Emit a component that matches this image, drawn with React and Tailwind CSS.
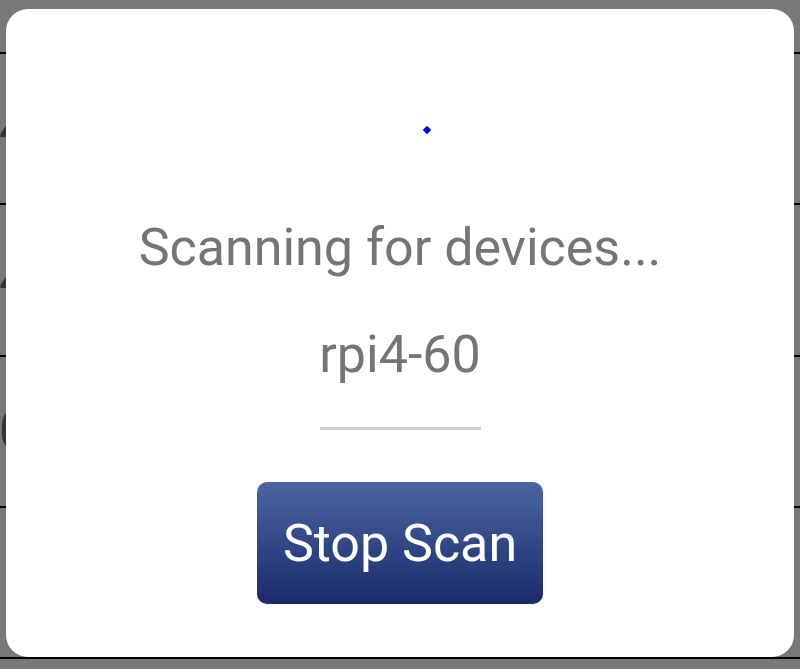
import React from "react";

const rows = ["4", "4", "0", "", ""];

export default function App() {
  return (
    <div className="relative h-[669px] w-[800px] overflow-hidden bg-[#787878] font-['Roboto',sans-serif]">
      {/* list behind the dialog */}
      <div className="flex flex-col">
        <div className="h-[52px]" />
        {rows.map((r, i) => (
          <div
            key={i}
            className="flex h-[151.25px] shrink-0 items-center border-t-2 border-black text-[52px] text-[#333333]"
          >
            <span className="-ml-[1px]">{r}</span>
          </div>
        ))}
      </div>

      {/* dialog */}
      <div className="absolute left-[6px] top-[9px] flex h-[648px] w-[788px] flex-col items-center rounded-[22px] bg-white">
        <div className="ml-[54px] mt-[118px] h-[6px] w-[6px] rotate-45 bg-[#0000e6]" />
        <p className="mt-[84px] h-[61px] text-[52px] leading-[61px] text-[#757575]">
          Scanning for devices...
        </p>
        <p className="mt-[46px] h-[61px] text-[52px] leading-[61px] text-[#757575]">
          rpi4-60
        </p>
        <div className="mt-[42px] h-[3px] w-[161px] bg-[#cfcfcf]" />
        <button className="mt-[52px] flex h-[122px] w-[286px] items-center justify-center rounded-[10px] bg-gradient-to-b from-[#4b66a4] to-[#1a2b68] text-[52px] leading-[61px] text-white">
          Stop Scan
        </button>
      </div>
    </div>
  );
}
